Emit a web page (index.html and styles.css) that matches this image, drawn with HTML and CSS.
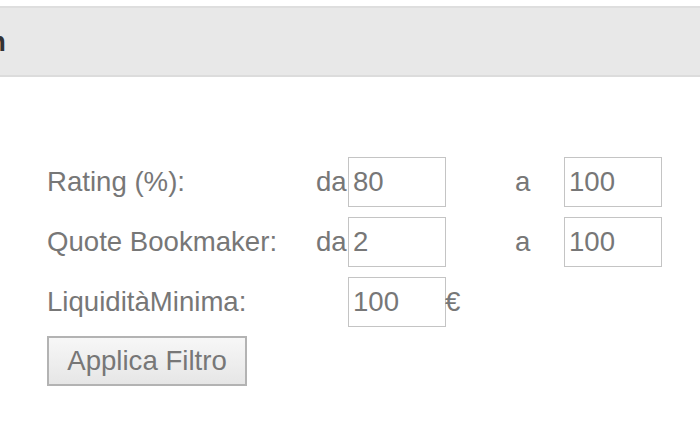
FILE: index.html
```html
<!DOCTYPE html>
<html lang="it">
<head>
<meta charset="utf-8">
<link rel="stylesheet" href="styles.css">
</head>
<body>
<div class="header"><h2 class="title">n</h2></div>
<form class="filter">
  <div class="grid">
    <span class="label">Rating (%):</span>
    <span class="da">da</span>
    <input class="field" type="text" value="80">
    <span class="a">a</span>
    <input class="field" type="text" value="100">

    <span class="label">Quote Bookmaker:</span>
    <span class="da">da</span>
    <input class="field" type="text" value="2">
    <span class="a">a</span>
    <input class="field" type="text" value="100">

    <span class="label">LiquiditàMinima:</span>
    <span class="da"></span>
    <input class="field" type="text" value="100">
    <span class="euro">€</span>
    <span></span>
  </div>
  <button class="btn" type="button">Applica Filtro</button>
</form>
</body>
</html>
```
FILE: styles.css
```css
html, body {
  margin: 0;
  padding: 0;
  background: #fff;
  font-family: "Liberation Sans", Arial, Helvetica, sans-serif;
}
body {
  padding-top: 6px;
}
.header {
  background: #e8e8e8;
  border-top: 2px solid #dedede;
  border-bottom: 2px solid #dcdcdc;
  padding: 18px 0 17px;
  overflow: hidden;
}
.title {
  margin: 0 0 0 -11px;
  font-size: 27.6px;
  line-height: 32px;
  font-weight: bold;
  color: #333;
}
.filter {
  padding: 80px 0 0 47px;
  color: #777;
  font-size: 27.6px;
}
.grid {
  display: grid;
  grid-template-columns: 269px 31px 98px 118px 98px;
  grid-auto-rows: 50px;
  row-gap: 10px;
  align-items: center;
}
.da {
  text-align: left;
  white-space: nowrap;
}
.field {
  box-sizing: border-box;
  width: 98px;
  height: 50px;
  margin: 0 0 0 1px;
  border: 1px solid #c4c4c4;
  padding: 0 0 0 4px;
  font: inherit;
  font-size: 27.6px;
  color: #777;
  background: #fff;
  outline: none;
}
.a {
  padding-left: 70px;
}
.euro {
  padding-left: 0;
}
.btn {
  margin-top: 9px;
  box-sizing: border-box;
  width: 200px;
  height: 50px;
  border: 2px solid #b3b3b3;
  border-radius: 0;
  background: linear-gradient(#f7f7f7, #e6e6e6);
  font: inherit;
  font-size: 27.6px;
  color: #777;
  padding: 0;
}
```
